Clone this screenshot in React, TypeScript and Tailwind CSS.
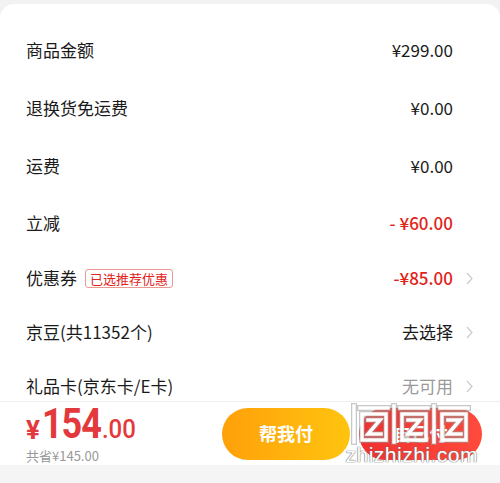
const font = { fontFamily: '"Noto Sans CJK SC", "Noto Sans", sans-serif' };

type Row = {
  label: string;
  value: string;
  tone?: "red" | "gray";
  badge?: string;
  arrow?: boolean;
  h: string;
};

const rows: Row[] = [
  { label: "商品金额", value: "¥299.00", h: "h-[58px]" },
  { label: "退换货免运费", value: "¥0.00", h: "h-[58px]" },
  { label: "运费", value: "¥0.00", h: "h-[58px]" },
  { label: "立减", value: "- ¥60.00", tone: "red", h: "h-[56px]" },
  { label: "优惠券", value: "-¥85.00", tone: "red", badge: "已选推荐优惠", arrow: true, h: "h-[54px]" },
  { label: "京豆(共11352个)", value: "去选择", arrow: true, h: "h-[54px]" },
  { label: "礼品卡(京东卡/E卡)", value: "无可用", tone: "gray", arrow: true, h: "h-[54px]" },
];

function Chevron() {
  return (
    <svg className="ml-[13px] mr-[1px]" width="7" height="13" viewBox="0 0 7 13" fill="none">
      <path d="M1 1 L6 6.5 L1 12" stroke="#cccccc" strokeWidth="1.3" />
    </svg>
  );
}

function Watermark() {
  const unit = (x: number) => (
    <g key={x} transform={`translate(${x} 0)`}>
      <path d="M4 4 V40 M10 6 H38 M12 12 V38 H36 M12 12 H36 V38 M18 18 H30 L18 32 H31" />
    </g>
  );
  return (
    <div className="pointer-events-none absolute right-[22px] top-[402px] flex flex-col items-center">
      <svg width="124" height="44" viewBox="0 0 124 44" fill="none" strokeLinecap="square">
        <g stroke="#9a9a9a" strokeWidth="6" opacity="0.55">
          {[0, 40, 80].map(unit)}
        </g>
        <g stroke="#ffffff" strokeWidth="3.5">
          {[0, 40, 80].map(unit)}
        </g>
      </svg>
      <span
        className="-mt-[2px] text-[21px] leading-none tracking-[0.5px] text-white"
        style={{
          fontFamily: '"Liberation Sans", Arial, sans-serif',
          textShadow: "0 0 1px #777, 0 0 1px #777, 0 0 1px #777",
        }}
      >
        zhizhizhi.com
      </span>
    </div>
  );
}

export default function App() {
  return (
    <div className="relative flex h-[483px] w-[500px] flex-col overflow-hidden bg-[#f2f2f2]" style={font}>
      <div className="mt-[4px] flex-1 overflow-hidden rounded-t-[14px] bg-white pt-[17px]">
        {rows.map((r) => (
          <div key={r.label} className={`flex ${r.h} items-center pl-[26px] pr-[26px]`}>
            <span className="text-[17px] text-[#1a1a1a]">{r.label}</span>
            {r.badge && (
              <span className="ml-[8px] rounded-[3px] border border-[#e89a92] px-[4px] text-[13px] leading-[17px] text-[#e2231a]">
                {r.badge}
              </span>
            )}
            <span
              className={`ml-auto text-[17px] ${
                r.tone === "red"
                  ? "font-medium text-[#e2231a]"
                  : r.tone === "gray"
                    ? "text-[#9a9a9a]"
                    : "text-[#1a1a1a]"
              } ${r.arrow ? "" : "mr-[21px]"}`}
            >
              {r.value}
            </span>
            {r.arrow && <Chevron />}
          </div>
        ))}
      </div>
      <div className="flex h-[64px] border-t border-[#eeeeee] bg-white pl-[26px] pr-[18px]">
        <div className="mt-[8px] flex flex-col">
          <div
            className="flex h-[34px] items-baseline font-bold text-[#e4393c]"
            style={{ fontFamily: '"Roboto", "Noto Sans", sans-serif' }}
          >
            <span className="text-[26px] leading-[34px]">¥</span>
            <span className="ml-[2px] inline-block origin-bottom scale-y-[1.18] text-[36px] leading-[34px] tracking-[-1px]">
              154
            </span>
            <span className="ml-[1px] inline-block origin-bottom scale-y-[1.1] text-[24px] font-medium leading-[34px]">
              .00
            </span>
          </div>
          <span className="mt-[4px] text-[13px] leading-[16px] text-[#999999]">共省¥145.00</span>
        </div>
        <div className="ml-auto flex items-center gap-[9px]">
          <button
            type="button"
            className="h-[52px] w-[128px] rounded-full bg-gradient-to-r from-[#ffa00a] to-[#ffc40f] text-[18px] font-bold text-white"
          >
            帮我付
          </button>
          <button
            type="button"
            className="h-[52px] w-[123px] rounded-full bg-gradient-to-r from-[#f02f2f] to-[#ff4a3c] text-[18px] font-bold text-white"
          >
            自己付
          </button>
        </div>
      </div>
      <div className="h-[18px] bg-[#f5f5f5]" />
      <Watermark />
    </div>
  );
}
